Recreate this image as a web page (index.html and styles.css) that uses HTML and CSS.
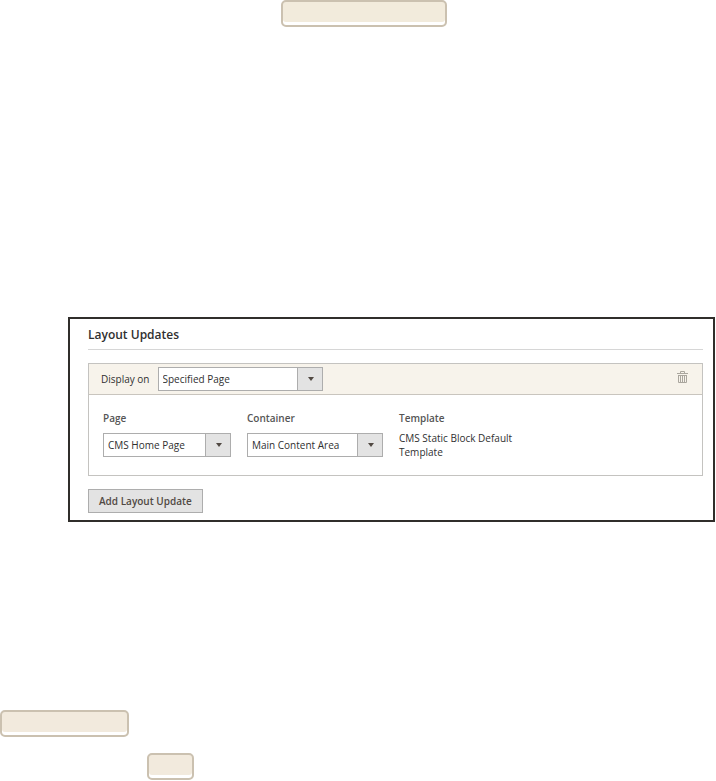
FILE: index.html
```html
<!DOCTYPE html>
<html lang="en">
<head>
<meta charset="utf-8">
<title>Layout Updates</title>
<link rel="stylesheet" href="styles.css">
</head>
<body>
<main class="page">
  <div class="tag tag-top"></div>
  <section class="panel">
    <h2 class="title">Layout Updates</h2>
    <div class="update">
      <div class="update-head">
        <label for="display">Display on</label>
        <span class="select select-wide"><select id="display"><option>Specified Page</option></select></span>
        <button class="delete" type="button" aria-label="Delete">
          <svg width="11" height="12" viewBox="0 0 11 12" fill="none" stroke="#aaa69e"><path d="M0 2.5h11M3.5 2V.5h4V2M1.5 4v7.5h8V4M1 4.500h9M3.500 5v6M5.500 5v6M7.500 5v6"/></svg>
        </button>
      </div>
      <div class="fields">
        <div class="field">
          <label class="caption" for="page">Page</label>
          <span class="select"><select id="page"><option>CMS Home Page</option></select></span>
        </div>
        <div class="field">
          <label class="caption" for="container">Container</label>
          <span class="select"><select id="container"><option>Main Content Area</option></select></span>
        </div>
        <div class="field">
          <span class="caption">Template</span>
          <p class="template">CMS Static Block Default Template</p>
        </div>
      </div>
    </div>
    <button class="add" type="button">Add Layout Update</button>
  </section>
  <div class="tag tag-middle"></div>
  <div class="tag tag-bottom"></div>
</main>
</body>
</html>
```

FILE: styles.css
```css
* {
  box-sizing: border-box;
}

body {
  margin: 0;
  background: #fff;
  color: #303030;
  font: 10px/14px "Open Sans", sans-serif;
}

.page {
  display: flex;
  flex-direction: column;
}

.tag {
  height: 27px;
  border: 2px solid #cbc1b0;
  border-radius: 5px;
  background: #f2eadd;
  box-shadow: inset 0 -3px #fff;
}

.tag-top {
  width: 166px;
  margin-left: 281px;
  background: #f2ebdc;
}

.tag-middle {
  width: 129px;
  margin-top: 188px;
}

.tag-bottom {
  width: 47px;
  margin: 16px 0 0 147px;
}

.panel {
  margin: 290px 1px 0 68px;
  padding: 7px 10px 7px 18px;
  border: 2px solid #302e2b;
}

.title {
  margin: 0 0 13px;
  padding-bottom: 5px;
  border-bottom: 1px solid #d6d6d6;
  font-size: 12px;
  line-height: 18px;
  font-weight: 600;
}

.update {
  border: 1px solid #c4c3c0;
}

.update-head {
  display: flex;
  align-items: center;
  gap: 8px;
  height: 31px;
  padding: 0 14px 0 12px;
  border-bottom: 1px solid #c9c5be;
  background: #f7f3eb;
}

.select {
  position: relative;
  display: block;
  height: 24px;
}

.select-wide {
  width: 165px;
}

.select select {
  appearance: none;
  width: 100%;
  height: 100%;
  padding: 0 28px 0 4px;
  border: 1px solid #adadad;
  border-radius: 0;
  background: linear-gradient(to left, #e3e3e3 24px, #adadad 24px, #adadad 25px, #fff 25px);
  color: #303030;
  font: inherit;
}

.select::after {
  content: "";
  position: absolute;
  top: 10px;
  right: 9px;
  border: solid transparent;
  border-width: 4px 3px 0;
  border-top-color: #514943;
  pointer-events: none;
}

.delete {
  display: flex;
  margin-left: auto;
  padding: 0 0 4px;
  border: 0;
  background: none;
}

.fields {
  display: grid;
  grid-template-columns: 128px 136px 136px;
  column-gap: 16px;
  padding: 16px 14px;
}

.caption {
  display: block;
  margin-bottom: 6px;
  color: #555;
  font-weight: 600;
}

.field .select {
  margin-top: 8px;
}

.template {
  margin: 0;
}

.add {
  display: block;
  height: 24px;
  margin-top: 13px;
  padding: 0 10px;
  border: 1px solid #adadad;
  background: #e3e3e3;
  color: #514943;
  font: inherit;
  font-weight: 600;
}
```
